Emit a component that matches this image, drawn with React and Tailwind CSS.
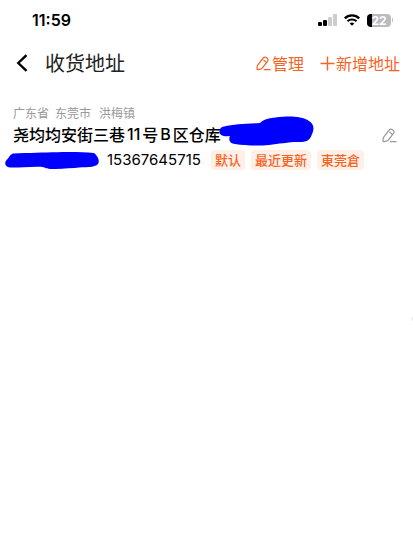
import React from "react";

const Pencil = ({ className }) => (
  <svg viewBox="0 0 16 16" className={className} fill="none" stroke="currentColor" strokeWidth="1.3" strokeLinejoin="round" strokeLinecap="round" aria-hidden="true">
    <path d="M1.800 9.800 L7.600 2.200 Q9 .4 11 1.700 L11.800 2.300 Q13.600 3.800 12.300 5.700 L6.600 13 Q6.200 13.500 5.600 13.700 L2.200 14.600 Q1 14.800 1.100 13.600 L1.300 10.900 Q1.400 10.200 1.800 9.800 Z" />
    <path d="M8.200 4.400 L10.600 6.300" />
    <path d="M9 14.600 H15" />
  </svg>
);

const StatusBar = () => (
  <div className="h-10 pl-8 pr-5 flex items-center justify-between">
    <span className="font-['Inter',sans-serif] text-base leading-5 font-semibold">11:59</span>
    <div className="flex items-center gap-[7px]">
      {/* Signal */}
      <svg viewBox="0 0 19 12" className="w-[19px] h-3" aria-hidden="true">
        <rect x="0" y="8" width="4" height="4" rx="1" fill="#000" />
        <rect x="5" y="6" width="4" height="6" rx="1" fill="#000" />
        <rect x="10" y="3" width="4" height="9" rx="1" fill="#ccc" />
        <rect x="15" y="0" width="4" height="12" rx="1" fill="#ccc" />
      </svg>
      {/* Wifi */}
      <svg viewBox="0 0 16 12" className="w-4 h-3" fill="none" stroke="#000" strokeWidth="2.2" aria-hidden="true">
        <path d="M.8 4.4 C4.8 .4 11.2 .4 15.2 4.4" />
        <path d="M3.5 7.3 C6 4.9 10 4.9 12.5 7.3" />
        <path d="M5.7 9.4 Q8 7.4 10.3 9.4 L8 11.8 Z" fill="#000" stroke="none" />
      </svg>
      {/* Battery */}
      <div className="flex items-center">
        <div className="w-6 h-[13px] rounded bg-linear-to-r from-black from-22% to-[#bbb] to-22% text-white font-['Inter',sans-serif] text-xs leading-[13px] font-bold text-center">
          22
        </div>
        <div className="w-px h-1 ml-px rounded-r bg-[#bbb]"></div>
      </div>
    </div>
  </div>
);

const Tag = ({ children }) => (
  <span className="h-5 px-1 rounded bg-[#fff0e7] text-[#f5631f] text-[13px] leading-5 font-medium">
    {children}
  </span>
);

const App = () => (
  <main className="relative min-h-screen bg-white text-black font-['Noto_Sans_CJK_SC',sans-serif]">
    <StatusBar />

    {/* Header */}
    <header className="h-[46px] pl-4 pr-[13px] flex items-center justify-between">
      <div className="flex items-center gap-[17px]">
        <button type="button" aria-label="返回">
          <svg viewBox="0 0 12 18" className="w-3 h-[18px]" fill="none" stroke="#000" strokeWidth="2.4" aria-hidden="true">
            <path d="M10.5 1.2 L2.3 9 L10.5 16.8" />
          </svg>
        </button>
        <h1 className="text-xl leading-7 font-normal text-[#222]">收货地址</h1>
      </div>
      <div className="flex items-center gap-4 text-base leading-6 text-[#f5631f]">
        <button type="button" className="flex items-center gap-px">
          <Pencil className="w-[15px] h-[15px]" />
          管理
        </button>
        <button type="button" className="flex items-center gap-px">
          <svg viewBox="0 0 15 15" className="w-[15px] h-[15px]" stroke="currentColor" strokeWidth="1.4" aria-hidden="true">
            <path d="M.5 7.5 H14.5 M7.5 .5 V14.5" />
          </svg>
          新增地址
        </button>
      </div>
    </header>

    {/* Address */}
    <section className="pt-[18px]">
      <div className="pl-[13px] pr-4 flex items-center">
        <div className="flex-1">
          <p className="flex text-xs leading-[18px] text-[#999]">
            <span>广东省</span>
            <span className="ml-1.5">东莞市</span>
            <span className="ml-2">洪梅镇</span>
          </p>
          <p className="flex text-base leading-6 font-medium whitespace-nowrap">
            <span>尧均均安街三巷</span>
            <span className="ml-0.5 font-['Inter','Noto_Sans_CJK_SC',sans-serif]">11</span>
            <span className="ml-0.5">号</span>
            <span className="mx-0.5 font-['Inter','Noto_Sans_CJK_SC',sans-serif]">B</span>
            <span>区仓库</span>
            <span className="relative">
              <svg viewBox="0 0 95 30" className="absolute -left-0.5 -top-1.5 w-[95px] h-[30px] max-w-none" fill="#0000ff" aria-hidden="true">
                <path d="M5 10.5 C15 8 25 7.800 41 7 C45 2.500 53 1.800 64 .8 C74 .2 84 1 90 5 C95 8 95.500 13 93 18 C91 25 87 26 80 26 C68 26 60 28 50 29 C38 30 26 29.500 16 28 C11 27.500 9 24 11 20 C6 21 1 20 .5 16 C0 13 2 11 5 10.5 Z" />
              </svg>
            </span>
          </p>
        </div>
        <button type="button" aria-label="编辑" className="mt-5 text-[#999]">
          <Pencil className="w-[15px] h-[15px]" />
        </button>
      </div>
      <div className="pl-[5px] pt-1 flex items-center">
        <svg viewBox="0 0 95 19" className="w-[95px] h-[19px]" fill="#0000ff" aria-hidden="true">
          <path d="M8 2.500 C25 1.800 38 1.500 52 1.200 C65 .8 78 1 89 2 C93 5 95 10 93 13 C90 17 80 15.500 70 17 C61 17.500 52 18 45 18 C41 18 40 16 36 15.800 C22 15.500 12 17 5 16.500 C0 16 -1 12 1.500 9 C4 7.500 4 4 8 2.500 Z" />
        </svg>
        <span className="ml-[7px] text-[15px] leading-5 font-['Inter',sans-serif]">15367645715</span>
        <div className="ml-2.5 flex gap-1.5">
          <Tag>默认</Tag>
          <Tag>最近更新</Tag>
          <Tag>東莞倉</Tag>
        </div>
      </div>
    </section>

    {/* Side handle */}
    <div className="absolute right-0 top-[317px] w-0.5 h-1 rounded-l bg-[#eee]"></div>
  </main>
);

export default App;
